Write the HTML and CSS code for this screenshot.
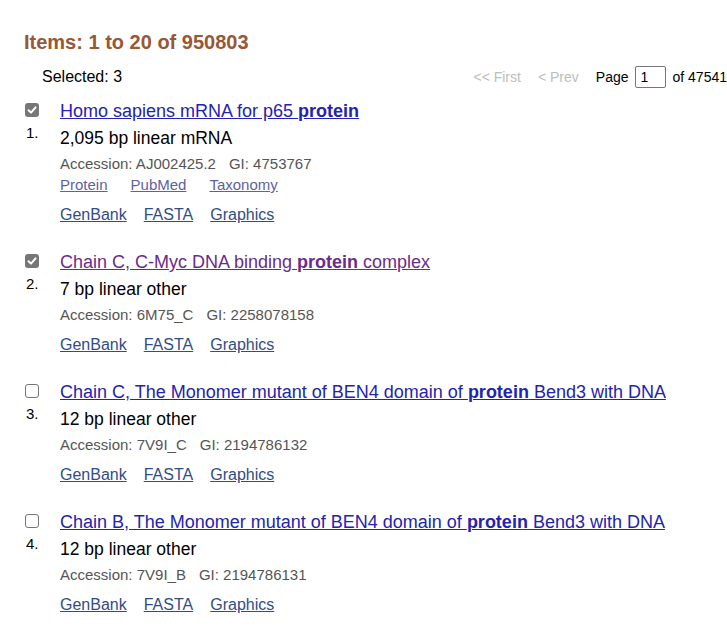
FILE: index.html
```html
<!DOCTYPE html>
<html>
<head>
<meta charset="utf-8">
<link rel="stylesheet" href="styles.css">
</head>
<body>
<div class="page">
  <h1 class="title">Items: 1 to 20 of 950803</h1>
  <div class="toolbar">
    <span class="selected">Selected: 3</span>
    <div class="pager">
      <span class="pg-off">&lt;&lt; First</span>
      <span class="pg-off">&lt; Prev</span>
      <span class="pg-label">Page</span>
      <input class="pg-input" type="text" value="1">
      <span class="pg-label">of 47541</span>
    </div>
  </div>

  <div class="item">
    <div class="left">
      <span class="cb checked"><svg viewBox="0 0 14 14" width="14" height="14"><path d="M3.5 7.2 L6 9.6 L10.6 4.4" fill="none" stroke="#fff" stroke-width="2" stroke-linecap="round" stroke-linejoin="round"/></svg></span>
      <span class="num">1.</span>
    </div>
    <div class="body">
      <a class="t-link" href="#">Homo sapiens mRNA for p65 <b>protein</b></a>
      <div class="desc">2,095 bp linear mRNA</div>
      <div class="acc">Accession: AJ002425.2<span class="sp"></span>GI: 4753767</div>
      <div class="rel"><a href="#">Protein</a><a href="#">PubMed</a><a href="#">Taxonomy</a></div>
      <div class="links"><a href="#">GenBank</a><a href="#">FASTA</a><a href="#">Graphics</a></div>
    </div>
  </div>

  <div class="item">
    <div class="left">
      <span class="cb checked"><svg viewBox="0 0 14 14" width="14" height="14"><path d="M3.5 7.2 L6 9.6 L10.6 4.4" fill="none" stroke="#fff" stroke-width="2" stroke-linecap="round" stroke-linejoin="round"/></svg></span>
      <span class="num">2.</span>
    </div>
    <div class="body">
      <a class="t-link visited" href="#">Chain C, C-Myc DNA binding <b>protein</b> complex</a>
      <div class="desc">7 bp linear other</div>
      <div class="acc">Accession: 6M75_C<span class="sp"></span>GI: 2258078158</div>
      <div class="links"><a href="#">GenBank</a><a href="#">FASTA</a><a href="#">Graphics</a></div>
    </div>
  </div>

  <div class="item">
    <div class="left">
      <span class="cb"></span>
      <span class="num">3.</span>
    </div>
    <div class="body">
      <a class="t-link" href="#">Chain C, The Monomer mutant of BEN4 domain of <b>protein</b> Bend3 with DNA</a>
      <div class="desc">12 bp linear other</div>
      <div class="acc">Accession: 7V9I_C<span class="sp"></span>GI: 2194786132</div>
      <div class="links"><a href="#">GenBank</a><a href="#">FASTA</a><a href="#">Graphics</a></div>
    </div>
  </div>

  <div class="item">
    <div class="left">
      <span class="cb"></span>
      <span class="num">4.</span>
    </div>
    <div class="body">
      <a class="t-link" href="#">Chain B, The Monomer mutant of BEN4 domain of <b>protein</b> Bend3 with DNA</a>
      <div class="desc">12 bp linear other</div>
      <div class="acc">Accession: 7V9I_B<span class="sp"></span>GI: 2194786131</div>
      <div class="links"><a href="#">GenBank</a><a href="#">FASTA</a><a href="#">Graphics</a></div>
    </div>
  </div>
</div>
</body>
</html>
```

FILE: styles.css
```css
html, body {
  margin: 0;
  padding: 0;
  background: #fff;
  overflow: hidden;
}
body {
  font-family: "Liberation Sans", Arial, sans-serif;
  color: #000;
}
.page {
  padding: 30px 0 0 24px;
}
.title {
  margin: 0;
  font-size: 20px;
  line-height: 24px;
  font-weight: bold;
  color: #985735;
}
.toolbar {
  display: flex;
  align-items: center;
  height: 24px;
  margin-top: 11px;
  font-size: 14px;
}
.selected {
  padding-left: 18px;
  font-size: 16px;
}
.pager {
  margin-left: auto;
  display: flex;
  align-items: center;
  white-space: nowrap;
}
.pg-off {
  color: #bdbdbd;
  margin-right: 17px;
}
.pg-label {
  color: #000;
}
.pg-input {
  box-sizing: border-box;
  width: 31px;
  height: 22px;
  margin: 0 7px 0 6px;
  padding: 0 5px;
  border: 1px solid #767676;
  border-radius: 2px;
  font-family: "Liberation Sans", Arial, sans-serif;
  font-size: 14px;
  color: #000;
  outline: none;
}
.item {
  display: grid;
  grid-template-columns: 36px 1fr;
  margin-top: 11px;
  margin-bottom: 26px;
}
.item + .item {
  margin-top: 0;
}
.left {
  display: flex;
  flex-direction: column;
  align-items: flex-start;
  padding-left: 1px;
}
.cb {
  box-sizing: border-box;
  width: 14px;
  height: 14px;
  margin-top: 3px;
  border: 1px solid #767676;
  border-radius: 3px;
  background: #fff;
  display: block;
}
.cb.checked {
  border: none;
  background: #767676;
}
.cb svg {
  display: block;
}
.num {
  margin-top: 6px;
  margin-left: 1px;
  font-size: 15px;
  line-height: 20px;
}
.body {
  display: flex;
  flex-direction: column;
  align-items: flex-start;
}
.t-link {
  font-size: 18px;
  line-height: 22px;
  color: #2323b3;
  text-decoration: underline;
}
.t-link.visited {
  color: #6a2c8c;
}
.t-link b {
  font-weight: bold;
}
.desc {
  margin-top: 5px;
  font-size: 17.5px;
  line-height: 22px;
  color: #000;
}
.acc {
  margin-top: 5px;
  font-size: 15px;
  line-height: 20px;
  color: #555;
}
.sp {
  display: inline-block;
  width: 13px;
}
.rel {
  margin-top: 1px;
  font-size: 15px;
  line-height: 20px;
  display: flex;
  gap: 23px;
}
.rel a {
  color: #5f5fa3;
  text-decoration: underline;
}
.links {
  margin-top: 10px;
  font-size: 16px;
  line-height: 20px;
  display: flex;
  gap: 17px;
}
.links a {
  color: #2f4d88;
  text-decoration: underline;
}
```
